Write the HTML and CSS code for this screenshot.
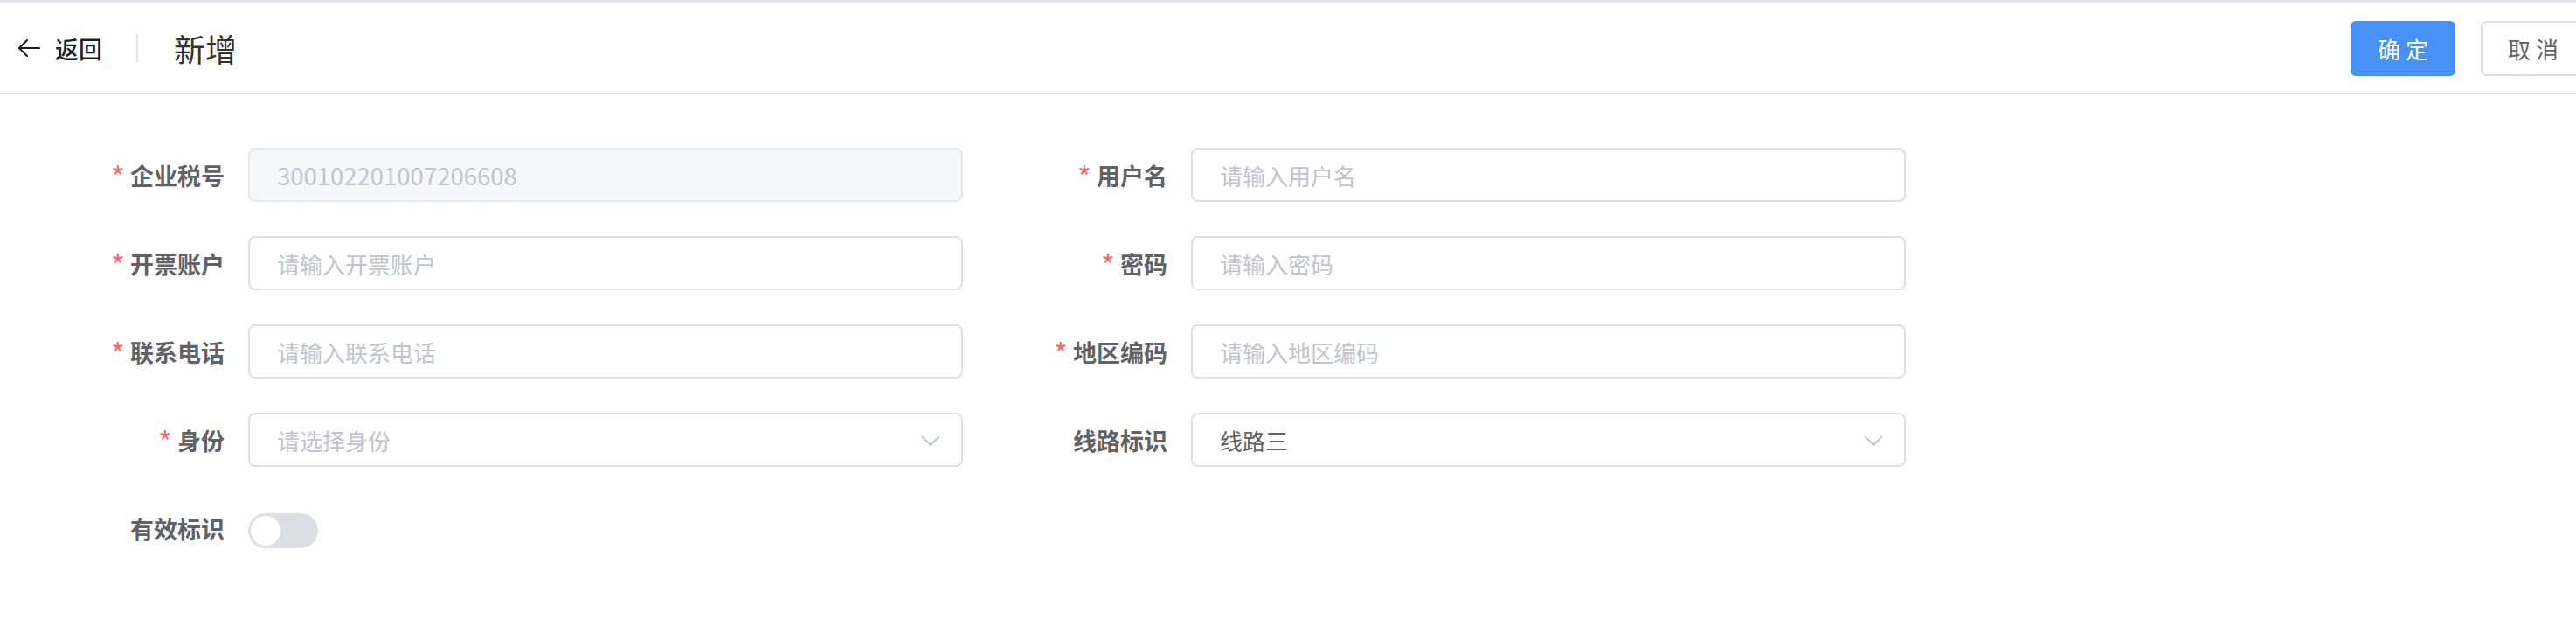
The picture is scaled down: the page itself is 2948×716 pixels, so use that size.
FILE: index.html
```html
<!DOCTYPE html>
<html lang="zh-CN">
<head>
<meta charset="utf-8">
<title>新增</title>
<link rel="stylesheet" href="styles.css">
</head>
<body>
<div class="topline"></div>
<header class="header">
  <div class="back">
    <svg class="back-icon" width="26" height="22" viewBox="0 0 26 22" fill="none" stroke="#1f1f1f" stroke-width="2.2" stroke-linecap="round" stroke-linejoin="round"><path d="M25 11H2"/><path d="M11 2L2 11l9 9"/></svg>
    <span class="back-text">返回</span>
  </div>
  <div class="sep"></div>
  <div class="title">新增</div>
  <div class="actions">
    <button class="btn btn-primary">确 定</button>
    <button class="btn btn-default">取 消</button>
  </div>
</header>
<main class="form">
  <div class="item">
    <label class="label"><span class="req">*</span>企业税号</label>
    <div class="control disabled">300102201007206608</div>
  </div>
  <div class="item">
    <label class="label"><span class="req">*</span>用户名</label>
    <div class="control placeholder">请输入用户名</div>
  </div>
  <div class="item">
    <label class="label"><span class="req">*</span>开票账户</label>
    <div class="control placeholder">请输入开票账户</div>
  </div>
  <div class="item">
    <label class="label"><span class="req">*</span>密码</label>
    <div class="control placeholder">请输入密码</div>
  </div>
  <div class="item">
    <label class="label"><span class="req">*</span>联系电话</label>
    <div class="control placeholder">请输入联系电话</div>
  </div>
  <div class="item">
    <label class="label"><span class="req">*</span>地区编码</label>
    <div class="control placeholder">请输入地区编码</div>
  </div>
  <div class="item">
    <label class="label"><span class="req">*</span>身份</label>
    <div class="control select placeholder"><span>请选择身份</span>
      <svg class="chev" width="22" height="13" viewBox="0 0 22 13" fill="none" stroke="#c0c4cc" stroke-width="1.8" stroke-linecap="round" stroke-linejoin="round"><path d="M1.5 1.5L11 11l9.5-9.5"/></svg>
    </div>
  </div>
  <div class="item">
    <label class="label">线路标识</label>
    <div class="control select value"><span>线路三</span>
      <svg class="chev" width="22" height="13" viewBox="0 0 22 13" fill="none" stroke="#c0c4cc" stroke-width="1.8" stroke-linecap="round" stroke-linejoin="round"><path d="M1.5 1.5L11 11l9.5-9.5"/></svg>
    </div>
  </div>
  <div class="item">
    <label class="label">有效标识</label>
    <div class="switch"><span class="knob"></span></div>
  </div>
</main>
</body>
</html>
```
FILE: styles.css
```css
* { box-sizing: border-box; }
html, body {
  margin: 0;
  padding: 0;
  background: #ffffff;
  font-family: "Noto Sans CJK SC", "Noto Sans", "Liberation Sans", sans-serif;
}
.topline {
  height: 4px;
  background: linear-gradient(#dcdee6, #f3f4f7);
}
.header {
  height: 104px;
  border-bottom: 2px solid #e4e6eb;
  display: flex;
  align-items: center;
  padding-left: 20px;
}
.back {
  display: flex;
  align-items: center;
  gap: 17px;
}
.back-icon { display: block; }
.back-text {
  font-size: 27px;
  color: #1f1f1f;
  font-weight: 500;
}
.sep {
  width: 2px;
  height: 32px;
  background: #e1e3e8;
  margin-left: 39px;
  margin-right: 41px;
}
.title {
  font-size: 36px;
  color: #303133;
}
.actions {
  margin-left: auto;
  display: flex;
  gap: 29px;
  margin-right: -11px;
}
.btn {
  width: 120px;
  height: 63px;
  border-radius: 6px;
  font-family: inherit;
  font-size: 26px;
  padding: 0;
  cursor: pointer;
}
.btn-primary {
  background: #4690f6;
  border: 2px solid #4690f6;
  color: #ffffff;
}
.btn-default {
  background: #ffffff;
  border: 2px solid #dcdfe6;
  color: #606266;
}
.form {
  display: grid;
  grid-template-columns: repeat(2, 1062px);
  column-gap: 17px;
  row-gap: 39px;
  padding: 61px 0 0 40px;
}
.item {
  display: flex;
  align-items: center;
  height: 62px;
}
.label {
  width: 244px;
  padding-right: 27px;
  text-align: right;
  font-size: 27px;
  font-weight: 700;
  color: #606266;
  white-space: nowrap;
  display: flex;
  justify-content: flex-end;
  align-items: center;
}
.req {
  color: #f56c6c;
  margin-right: 6px;
  font-weight: 400;
  font-size: 34px;
  line-height: 1;
  position: relative;
  top: 2px;
}
.control {
  width: 818px;
  height: 62px;
  border: 2px solid #dcdfe6;
  border-radius: 8px;
  padding: 0 31px;
  display: flex;
  align-items: center;
  font-size: 26px;
  white-space: nowrap;
}
.control.placeholder { color: #c0c4cc; }
.control.value { color: #606266; }
.control.disabled {
  background: #f5f7fa;
  border-color: #e4e7ed;
  color: #c0c4cc;
  font-size: 27.5px;
}
.control.select {
  justify-content: space-between;
  padding-right: 24px;
}
.chev { display: block; margin-top: 2px; }
.switch {
  width: 80px;
  height: 40px;
  border-radius: 20px;
  background: #dcdfe6;
  padding: 3px;
  margin-top: 5px;
  display: flex;
  align-items: center;
}
.knob {
  width: 34px;
  height: 34px;
  border-radius: 50%;
  background: #ffffff;
}
```
